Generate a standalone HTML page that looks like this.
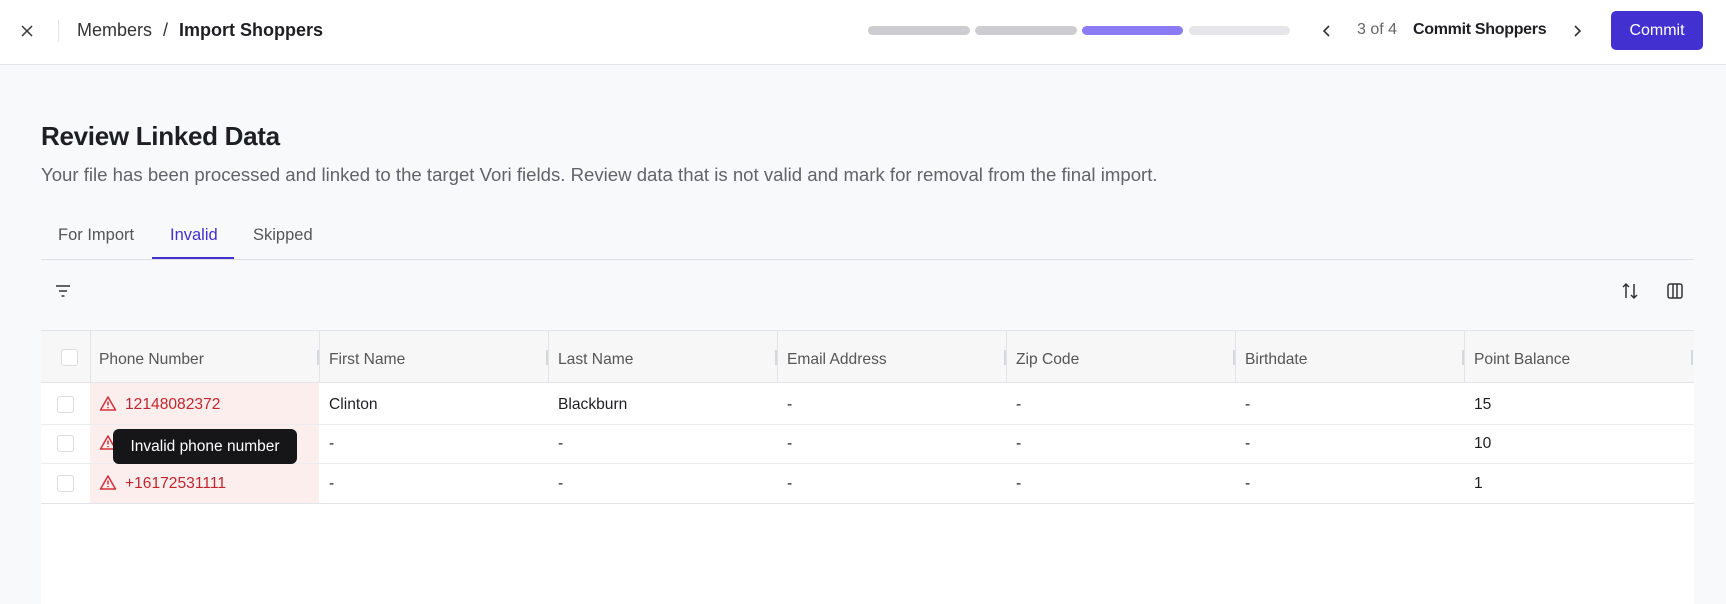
<!DOCTYPE html>
<html><head><meta charset="utf-8"><style>
*{box-sizing:border-box;margin:0;padding:0}
body{width:1726px;height:604px;overflow:hidden;background:#f8f9fb;font-family:"Liberation Sans",sans-serif;position:relative;color:#1f1f23}
.a{position:absolute}
.hdr{left:0;top:0;width:1726px;height:65px;background:#fff;border-bottom:1px solid #e3e4e8}
.bar{top:26px;height:9px;border-radius:5px}
.t{white-space:nowrap}
.cell{position:absolute;font-size:15.6px;white-space:nowrap}
.cb{position:absolute;width:17px;height:17px;border:1px solid #dcdde1;border-radius:3px;background:#fff}
</style></head><body>
<div class="a hdr"></div>
<svg class="a" style="left:20px;top:24px" width="14" height="14" viewBox="0 0 14 14"><path d="M2 2L12 12M12 2L2 12" stroke="#333" stroke-width="1.5"/></svg>
<div class="a" style="left:58px;top:20px;width:1px;height:22px;background:#e3e4e8"></div>
<div class="a t" style="left:77px;top:20px;font-size:18px;color:#333">Members <span style="margin:0 6px">/</span> <b style="color:#1f1f23;font-weight:600">Import Shoppers</b></div>
<div class="a bar" style="left:868px;width:102px;background:#ccccd1"></div>
<div class="a bar" style="left:975px;width:102px;background:#ccccd1"></div>
<div class="a bar" style="left:1082px;width:101px;background:#8b7cf6"></div>
<div class="a bar" style="left:1189px;width:101px;background:#e6e6ea"></div>
<svg class="a" style="left:1321px;top:24px" width="12" height="14" viewBox="0 0 12 14"><path d="M8 2L3 7L8 12" fill="none" stroke="#333" stroke-width="1.6"/></svg>
<div class="a t" style="left:1357px;top:21px;font-size:16px;color:#666">3 of 4</div>
<div class="a t" style="left:1413px;top:21px;font-size:16px;color:#1f1f23;font-weight:600;letter-spacing:-0.3px">Commit Shoppers</div>
<svg class="a" style="left:1571px;top:24px" width="12" height="14" viewBox="0 0 12 14"><path d="M4 2L9 7L4 12" fill="none" stroke="#333" stroke-width="1.6"/></svg>
<div class="a t" style="left:1611px;top:11px;width:92px;height:39px;background:#4330d0;border-radius:5px;color:#fff;font-size:16px;line-height:39px;text-align:center">Commit</div>

<div class="a t" style="left:41px;top:121px;font-size:26px;font-weight:700;letter-spacing:-0.3px">Review Linked Data</div>
<div class="a t" style="left:41px;top:164px;font-size:18.6px;color:#626268">Your file has been processed and linked to the target Vori fields. Review data that is not valid and mark for removal from the final import.</div>
<div class="a t" style="left:58px;top:226px;font-size:16.5px;color:#555">For Import</div>
<div class="a t" style="left:170px;top:226px;font-size:16.5px;color:#4330d0">Invalid</div>
<div class="a t" style="left:253px;top:226px;font-size:16.5px;color:#555">Skipped</div>
<div class="a" style="left:41px;top:259px;width:1653px;height:1px;background:#dfe0e4"></div>
<div class="a" style="left:152px;top:257px;width:82px;height:2px;background:#4330d0"></div>
<svg class="a" style="left:54px;top:283px" width="18" height="16" viewBox="0 0 18 16"><path d="M2 3H16M5 8H13M7.5 13H10.5" stroke="#333" stroke-width="1.6"/></svg>
<svg class="a" style="left:1621px;top:282px" width="18" height="18" viewBox="0 0 18 18"><path d="M5 16V2M2 5L5 2L8 5M13 2V16M10 13L13 16L16 13" fill="none" stroke="#333" stroke-width="1.5"/></svg>
<svg class="a" style="left:1666px;top:282px" width="18" height="18" viewBox="0 0 18 18"><rect x="2" y="2" width="14" height="14" rx="2" fill="none" stroke="#333" stroke-width="1.5"/><path d="M7 2V16M11 2V16" stroke="#333" stroke-width="1.5"/></svg>

<div class="a" style="left:41px;top:330px;width:1653px;height:274px;background:#fff;border-top:1px solid #e3e4e8">
  <div class="a" style="left:0;top:0;width:1653px;height:52px;background:#f7f7f8;border-bottom:1px solid #e3e4e8"></div>
  <div class="a" style="left:49px;top:52px;width:229px;height:120px;background:#fdeeee"></div>
  <div class="a" style="left:0;top:93px;width:1653px;height:1px;background:#ececef"></div>
  <div class="a" style="left:0;top:132px;width:1653px;height:1px;background:#ececef"></div>
  <div class="a" style="left:0;top:172px;width:1653px;height:1px;background:#e3e4e8"></div>
  <div class="a" style="left:49px;top:0;width:1px;height:52px;background:#e3e4e8"></div>
  <div class="a" style="left:278px;top:0;width:1px;height:52px;background:#e3e4e8"></div>
  <div class="a" style="left:507px;top:0;width:1px;height:52px;background:#e3e4e8"></div>
  <div class="a" style="left:736px;top:0;width:1px;height:52px;background:#e3e4e8"></div>
  <div class="a" style="left:965px;top:0;width:1px;height:52px;background:#e3e4e8"></div>
  <div class="a" style="left:1194px;top:0;width:1px;height:52px;background:#e3e4e8"></div>
  <div class="a" style="left:1423px;top:0;width:1px;height:52px;background:#e3e4e8"></div>
  <div class="a" style="left:276px;top:19px;width:2px;height:15px;background:#d7d8dc"></div>
  <div class="a" style="left:505px;top:19px;width:2px;height:15px;background:#d7d8dc"></div>
  <div class="a" style="left:734px;top:19px;width:2px;height:15px;background:#d7d8dc"></div>
  <div class="a" style="left:963px;top:19px;width:2px;height:15px;background:#d7d8dc"></div>
  <div class="a" style="left:1192px;top:19px;width:2px;height:15px;background:#d7d8dc"></div>
  <div class="a" style="left:1421px;top:19px;width:2px;height:15px;background:#d7d8dc"></div>
  <div class="a" style="left:1650px;top:19px;width:2px;height:15px;background:#d7d8dc"></div>
  <div class="cb" style="left:20px;top:18px"></div>
  <div class="cb" style="left:16px;top:65px"></div>
  <div class="cb" style="left:16px;top:104px"></div>
  <div class="cb" style="left:16px;top:144px"></div>
  <div class="cell" style="left:58px;top:20px;color:#555">Phone Number</div>
  <div class="cell" style="left:288px;top:20px;color:#555">First Name</div>
  <div class="cell" style="left:517px;top:20px;color:#555">Last Name</div>
  <div class="cell" style="left:746px;top:20px;color:#555">Email Address</div>
  <div class="cell" style="left:975px;top:20px;color:#555">Zip Code</div>
  <div class="cell" style="left:1204px;top:20px;color:#555">Birthdate</div>
  <div class="cell" style="left:1433px;top:20px;color:#555">Point Balance</div>
  <svg class="a" style="left:58px;top:64px" width="18" height="17" viewBox="0 0 18 17"><path d="M9 2L16.5 15H1.5Z" fill="none" stroke="#d0303a" stroke-width="1.5" stroke-linejoin="round"/><path d="M9 6.5V10.5M9 12V13.2" stroke="#d0303a" stroke-width="1.5"/></svg>
  <svg class="a" style="left:58px;top:103px" width="18" height="17" viewBox="0 0 18 17"><path d="M9 2L16.5 15H1.5Z" fill="none" stroke="#d0303a" stroke-width="1.5" stroke-linejoin="round"/><path d="M9 6.5V10.5M9 12V13.2" stroke="#d0303a" stroke-width="1.5"/></svg>
  <svg class="a" style="left:58px;top:143px" width="18" height="17" viewBox="0 0 18 17"><path d="M9 2L16.5 15H1.5Z" fill="none" stroke="#d0303a" stroke-width="1.5" stroke-linejoin="round"/><path d="M9 6.5V10.5M9 12V13.2" stroke="#d0303a" stroke-width="1.5"/></svg>
  <div class="cell" style="left:84px;top:65px;color:#c0262f">12148082372</div>
  <div class="cell" style="left:84px;top:144px;color:#c0262f">+16172531111</div>
  <div class="cell" style="left:288px;top:65px">Clinton</div>
  <div class="cell" style="left:517px;top:65px">Blackburn</div>
  <div class="cell" style="left:746px;top:65px">-</div>
  <div class="cell" style="left:975px;top:65px">-</div>
  <div class="cell" style="left:1204px;top:65px">-</div>
  <div class="cell" style="left:1433px;top:65px">15</div>
  <div class="cell" style="left:288px;top:104px">-</div>
  <div class="cell" style="left:517px;top:104px">-</div>
  <div class="cell" style="left:746px;top:104px">-</div>
  <div class="cell" style="left:975px;top:104px">-</div>
  <div class="cell" style="left:1204px;top:104px">-</div>
  <div class="cell" style="left:1433px;top:104px">10</div>
  <div class="cell" style="left:288px;top:144px">-</div>
  <div class="cell" style="left:517px;top:144px">-</div>
  <div class="cell" style="left:746px;top:144px">-</div>
  <div class="cell" style="left:975px;top:144px">-</div>
  <div class="cell" style="left:1204px;top:144px">-</div>
  <div class="cell" style="left:1433px;top:144px">1</div>
  <div class="a t" style="left:72px;top:98px;width:184px;height:35px;background:#161618;border-radius:6px;color:#fff;font-size:15.5px;line-height:35px;text-align:center">Invalid phone number</div>
</div>
</body></html>
